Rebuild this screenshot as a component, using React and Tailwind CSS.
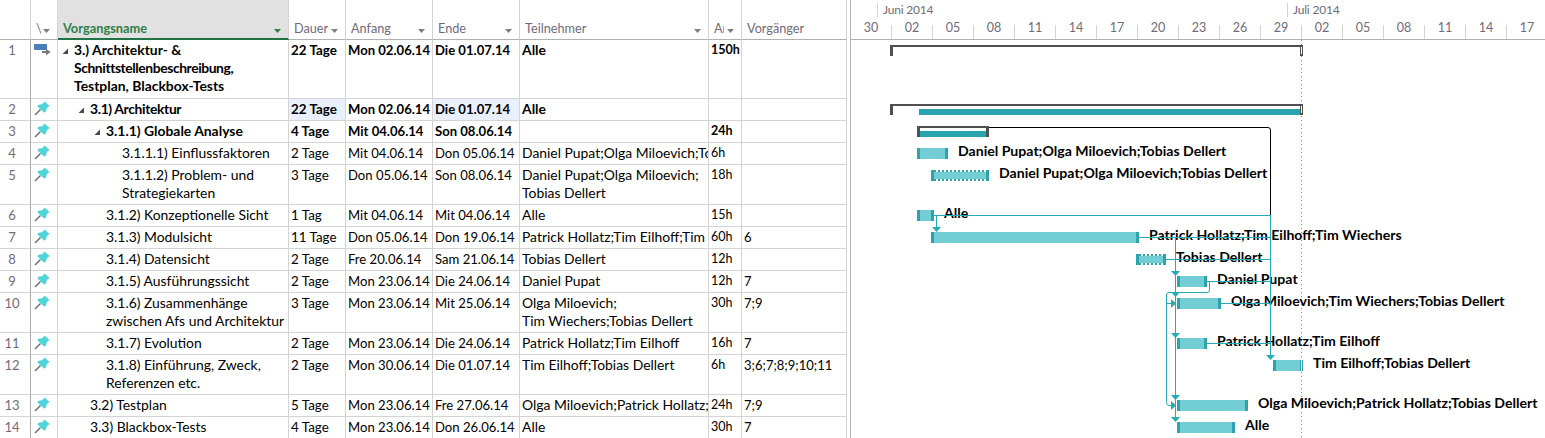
import React from "react";

const FONT = "font-['Lato','Noto_Sans',sans-serif]";

const rows = [
  { h: "h-[59px]", n: "1", icon: "summary", level: 0, tri: true, bold: true, name: ["3.) Architektur- &", ["Schnittstellenbeschreibung,", "tracking-[-0.42px]"], "Testplan, Blackbox-Tests"], dur: "22 Tage", start: "Mon 02.06.14", end: "Die 01.07.14", res: ["Alle"], work: "150h", pred: "" },
  { h: "h-[22px]", n: "2", level: 1, tri: true, bold: true, hl: true, name: [["3.1) Architektur", "tracking-[-0.36px]"]], dur: "22 Tage", start: "Mon 02.06.14", end: "Die 01.07.14", res: ["Alle"], work: "", pred: "" },
  { h: "h-[22px]", n: "3", level: 2, tri: true, bold: true, name: ["3.1.1) Globale Analyse"], dur: "4 Tage", start: "Mit 04.06.14", end: "Son 08.06.14", res: [""], work: "24h", pred: "" },
  { h: "h-[22px]", n: "4", level: 3, name: ["3.1.1.1) Einflussfaktoren"], dur: "2 Tage", start: "Mit 04.06.14", end: "Don 05.06.14", res: ["Daniel Pupat;Olga Miloevich;Tobias Dellert"], work: "6h", pred: "" },
  { h: "h-[40px]", n: "5", level: 3, name: ["3.1.1.2) Problem- und", "Strategiekarten"], dur: "3 Tage", start: "Don 05.06.14", end: "Son 08.06.14", res: ["Daniel Pupat;Olga Miloevich;", "Tobias Dellert"], work: "18h", pred: "" },
  { h: "h-[22px]", n: "6", level: 2, name: ["3.1.2) Konzeptionelle Sicht"], dur: "1 Tag", start: "Mit 04.06.14", end: "Mit 04.06.14", res: ["Alle"], work: "15h", pred: "" },
  { h: "h-[22px]", n: "7", level: 2, name: ["3.1.3) Modulsicht"], dur: "11 Tage", start: "Don 05.06.14", end: "Don 19.06.14", res: ["Patrick Hollatz;Tim Eilhoff;Tim Wiechers"], work: "60h", pred: "6" },
  { h: "h-[22px]", n: "8", level: 2, name: ["3.1.4) Datensicht"], dur: "2 Tage", start: "Fre 20.06.14", end: "Sam 21.06.14", res: ["Tobias Dellert"], work: "12h", pred: "" },
  { h: "h-[22px]", n: "9", level: 2, name: ["3.1.5) Ausführungssicht"], dur: "2 Tage", start: "Mon 23.06.14", end: "Die 24.06.14", res: ["Daniel Pupat"], work: "12h", pred: "7" },
  { h: "h-[40px]", n: "10", level: 2, name: ["3.1.6) Zusammenhänge", "zwischen Afs und Architektur"], dur: "3 Tage", start: "Mon 23.06.14", end: "Mit 25.06.14", res: ["Olga Miloevich;", "Tim Wiechers;Tobias Dellert"], work: "30h", pred: "7;9" },
  { h: "h-[22px]", n: "11", level: 2, name: ["3.1.7) Evolution"], dur: "2 Tage", start: "Mon 23.06.14", end: "Die 24.06.14", res: ["Patrick Hollatz;Tim Eilhoff"], work: "16h", pred: "7" },
  { h: "h-[40px]", n: "12", level: 2, name: ["3.1.8) Einführung, Zweck,", "Referenzen etc."], dur: "2 Tage", start: "Mon 30.06.14", end: "Die 01.07.14", res: ["Tim Eilhoff;Tobias Dellert"], work: "6h", pred: "3;6;7;8;9;10;11" },
  { h: "h-[22px]", n: "13", level: 1, name: ["3.2) Testplan"], dur: "5 Tage", start: "Mon 23.06.14", end: "Fre 27.06.14", res: ["Olga Miloevich;Patrick Hollatz;Tobias Dellert"], work: "24h", pred: "7;9" },
  { h: "h-[22px]", n: "14", level: 1, name: ["3.3) Blackbox-Tests"], dur: "4 Tage", start: "Mon 23.06.14", end: "Don 26.06.14", res: ["Alle"], work: "30h", pred: "7" },
];

const GRID = "grid grid-cols-[31px_27px_231px_57px_87px_87px_189px_33px_105px]";

function Caret({ color = "#7f7f7f" }) {
  return (
    <svg width="8" height="4" viewBox="0 0 8 4" className="absolute right-[6px] top-[29px]">
      <path d="M0 0H7L3.5 4Z" fill={color} />
    </svg>
  );
}

function Pin() {
  return (
    <svg width="16" height="16" viewBox="0 0 16 16" className="ml-[3px] mt-[2px]">
      <path d="M1 14L6.5 8.5" stroke="#6b6b6b" strokeWidth="1.4" />
      <path d="M10.5 0.5L15.5 5L13 7L11.5 11L10 11.5L3.5 5.5L4 4L8.5 3Z" fill="#4dd5da" />
    </svg>
  );
}

function SummaryIcon() {
  return (
    <svg width="17" height="12" viewBox="0 0 17 12" className="ml-[3px] mt-[4px]">
      <rect x="0" y="0" width="13" height="6" rx="1" fill="#4a7ebb" />
      <path d="M8 7H12V4.5L16.5 8L12 11.5V9H8Z" fill="#7a7a7a" />
    </svg>
  );
}

function Tri() {
  return (
    <svg width="7" height="7" viewBox="0 0 7 7" className="absolute top-[7px] left-0">
      <path d="M6 0.5V6H0.5Z" fill="#4a4a4a" />
    </svg>
  );
}

function Lines({ lines }) {
  return lines.map((l, i) => {
    const text = Array.isArray(l) ? l[0] : l;
    const cls = Array.isArray(l) ? l[1] : "";
    return (
      <div key={i} className={`whitespace-nowrap overflow-hidden ${cls}`}>{text || "\u00a0"}</div>
    );
  });
}

function Header() {
  const cell = "relative border-r border-[#d4d4d4] border-b border-b-[#b0b0b0] h-[40px] text-[12.7px] text-[#6f6b7c] pt-[19px] leading-[18px] whitespace-nowrap overflow-hidden";
  return (
    <div className={GRID}>
      <div className="h-[40px] border-r border-[#d4d4d4] border-b border-b-[#b0b0b0]" />
      <div className={`${cell} pl-[5px]`}>\<Caret /></div>
      <div className="relative h-[40px] bg-[#e1e1e1] border-r border-[#d4d4d4] border-b-2 border-b-[#217346] pl-[5px] pt-[19px] leading-[18px] text-[12.8px] font-bold text-[#2f7f4a]">
        Vorgangsname<Caret color="#2f7f4a" />
      </div>
      <div className={`${cell} pl-[5px]`}>Dauer<Caret /></div>
      <div className={`${cell} pl-[5px]`}>Anfang<Caret /></div>
      <div className={`${cell} pl-[5px]`}>Ende<Caret /></div>
      <div className={`${cell} pl-[5px]`}>Teilnehmer<Caret /></div>
      <div className={`${cell} pl-[5px]`}><span className="inline-block w-[10px] overflow-hidden align-bottom">Arbeit</span><Caret /></div>
      <div className={`${cell} pl-[5px]`}>Vorgänger</div>
    </div>
  );
}

function Row({ r }) {
  const c = "border-r border-b border-[#d4d4d4] pl-[2px] pt-[1px] overflow-hidden";
  const weight = r.bold ? "font-bold" : "";
  const pad = ["pl-[16px]", "pl-[32px]", "pl-[48px]", "pl-[64px]"][r.level];
  return (
    <div className={`${GRID} ${r.h} leading-[18px] text-[13.9px] text-black ${weight}`}>
      <div className="border-b border-[#d4d4d4] border-r border-r-[#a9a9a9] text-center pr-[6px] pt-[1px] text-[#6f6b7c] font-normal text-[13px]">{r.n}</div>
      <div className="border-r border-b border-[#d4d4d4]">{r.icon === "summary" ? <SummaryIcon /> : <Pin />}</div>
      <div className={`border-r border-b border-[#d4d4d4] pt-[1px] ${pad}`}>
        <div className="relative">
          {r.tri && <div className="absolute top-0 left-[-12px] w-[7px] h-[18px]"><Tri /></div>}
          <Lines lines={r.name} />
        </div>
      </div>
      <div className={`${c} text-[13.4px] ${r.hl ? "bg-[#eaf0fb]" : ""}`}>{r.dur}</div>
      <div className={`${c} text-[13.1px]`}>{r.start}</div>
      <div className={`${c} text-[13.1px] ${r.hl ? "bg-[#eaf0fb]" : ""}`}>{r.end}</div>
      <div className={c}><Lines lines={r.res} /></div>
      <div className={`${c} text-[12.5px]`}>{r.work}</div>
      <div className={`${c} text-[13px] pl-[1px]`}>{r.pred}</div>
    </div>
  );
}

const TEAL = "#2aa5ae";
const LIGHT = "#72cdd4";
const LINE = "#25abb8";
const DARK = "#505050";

function Bar({ x, x2, y, dotted, open }) {
  return (
    <g shapeRendering="crispEdges">
      {dotted ? (
        <>
          <rect x={x} y={y + 2} width={x2 - x} height={7} fill={LIGHT} />
          <path d={`M${x + 3} ${y + 1}H${x2 - 3}M${x + 3} ${y + 10}H${x2 - 3}`} stroke={TEAL} strokeWidth="2" strokeDasharray="2 2" />
        </>
      ) : (
        <rect x={x} y={y} width={x2 - x} height={11} fill={LIGHT} />
      )}
      <rect x={x} y={y} width={3} height={11} fill={TEAL} />
      {open ? (
        <>
          <rect x={x2 - 3} y={y} width={1} height={11} fill={TEAL} />
          <rect x={x2 - 2} y={y} width={1} height={11} fill="#ffffff" />
          <rect x={x2 - 1} y={y} width={1} height={11} fill={TEAL} />
        </>
      ) : (
        <rect x={x2 - 3} y={y} width={3} height={11} fill={TEAL} />
      )}
    </g>
  );
}

function Summary({ x, x2, y }) {
  return (
    <g shapeRendering="crispEdges">
      <rect x={x} y={y} width={x2 - x} height={2} fill={DARK} />
      <rect x={x} y={y} width={3} height={11} fill={DARK} />
      <rect x={x2 - 3} y={y} width={3} height={11} fill={DARK} />
    </g>
  );
}

const Down = ({ x, y }) => <path d={`M${x - 4.5} ${y}H${x + 4.5}L${x} ${y + 5}Z`} fill={LINE} />;
const Right = ({ x, y }) => <path d={`M${x} ${y - 4.5}V${y + 4.5}L${x + 5} ${y}Z`} fill={LINE} />;

const labels = [
  [958, 156, "Daniel Pupat;Olga Miloevich;Tobias Dellert"],
  [999, 178, "Daniel Pupat;Olga Miloevich;Tobias Dellert"],
  [944, 218, "Alle"],
  [1149, 240, "Patrick Hollatz;Tim Eilhoff;Tim Wiechers"],
  [1176, 262, "Tobias Dellert"],
  [1217, 284, "Daniel Pupat"],
  [1231, 306, "Olga Miloevich;Tim Wiechers;Tobias Dellert"],
  [1217, 346, "Patrick Hollatz;Tim Eilhoff"],
  [1313, 368, "Tim Eilhoff;Tobias Dellert"],
  [1258, 408, "Olga Miloevich;Patrick Hollatz;Tobias Dellert"],
  [1245, 430, "Alle"],
];

function Chart() {
  return (
    <svg width="694" height="398" viewBox="851 40 694 398" className="block">
      <path d="M1301.5 40V438" stroke="#8a8a8a" strokeDasharray="1 3" />
      <Summary x={890} x2={1303} y={45} />
      <Summary x={890} x2={1303} y={104} />
      <rect x="1301" y="47" width="1" height="7" fill="#fff" shapeRendering="crispEdges" />
      <rect x="1301" y="106" width="1" height="7" fill="#fff" shapeRendering="crispEdges" />
      <rect x="919" y="109" width="381" height="6" fill={TEAL} shapeRendering="crispEdges" />

      <rect x="920" y="131" width="66" height="6" fill={TEAL} shapeRendering="crispEdges" />
      <Summary x={917} x2={989} y={126} />

      <Bar x={917} x2={948} y={148} />
      <Bar x={931} x2={989} y={170} dotted />
      <Bar x={917} x2={934} y={210} />
      <Bar x={931} x2={1139} y={232} />
      <Bar x={1136} x2={1166} y={254} dotted />
      <Bar x={1177} x2={1207} y={276} />
      <Bar x={1177} x2={1221} y={298} />
      <Bar x={1177} x2={1207} y={338} />
      <Bar x={1273} x2={1303} y={360} open />
      <Bar x={1177} x2={1248} y={400} />
      <Bar x={1177} x2={1235} y={422} />

      {labels.map(([x, y, t], i) => (
        <text key={i} x={x} y={y} fontFamily="Lato, sans-serif" fontWeight="700" fontSize="14.1" fill="#000">{t}</text>
      ))}

      <path d="M989 127.5H1268Q1270.5 127.5 1270.5 130V215" fill="none" stroke="#000" />
      <g fill="none" stroke={LINE} shapeRendering="crispEdges">
        <path d="M934 215.5H1270.5V356" />
        <path d="M936.5 216V228" />
        <path d="M1139 237.5H1270" />
        <path d="M1166 259.5H1270" />
        <path d="M1207 281.5H1270" />
        <path d="M1221 303.5H1270" />
        <path d="M1207 343.5H1270" />
        <path d="M1175.5 237V417" />
      </g>
      <path d="M1207 281.5H1209.5V290Q1209.5 292.5 1207 292.5H1169Q1166.5 292.5 1166.5 295V402.5Q1166.5 405.5 1169 405.5H1172M1166.5 303.5H1172" fill="none" stroke={LINE} />
      <Down x={936.5} y={227} />
      <Down x={1175.5} y={271} />
      <Down x={1175.5} y={292} />
      <Down x={1175.5} y={333} />
      <Down x={1270.5} y={355} />
      <Down x={1175.5} y={395} />
      <Down x={1175.5} y={417} />
      <Right x={1171} y={303.5} />
      <Right x={1171} y={405.5} />
    </svg>
  );
}

const days = ["02", "05", "08", "11", "14", "17", "20", "23", "26", "29", "02", "05", "08", "11", "14", "17"];

function TimeScale() {
  return (
    <div className="h-[40px] border-b border-[#b0b0b0] text-[12.5px] text-[#6f6b7c]">
      <div className="flex h-[25px] pt-[3px] text-[12px] tracking-[-0.2px]">
        <div className="w-[26px] shrink-0" />
        <div className="w-[410px] shrink-0 border-l border-[#d4d4d4] pl-[5px] leading-[14px] h-[14px]">Juni 2014</div>
        <div className="flex-1 border-l border-[#d4d4d4] pl-[5px] leading-[14px] h-[14px]">Juli 2014</div>
      </div>
      <div className="flex h-[14px]">
        <div className="w-[40px] shrink-0 text-center leading-[6px]">30</div>
        {days.map((d, i) => (
          <div key={i} className="w-[41px] shrink-0 border-l border-[#d4d4d4] text-center leading-[6px]">{d}</div>
        ))}
      </div>
    </div>
  );
}

export default function App() {
  return (
    <div className={`${FONT} flex w-[1545px] h-[438px] overflow-hidden bg-white`}>
      <div className="w-[847px] shrink-0">
        <Header />
        {rows.map((r) => <Row key={r.n} r={r} />)}
      </div>
      <div className="w-[4px] shrink-0 border-r border-[#b5b5b5]" />
      <div className="flex-1 min-w-0">
        <TimeScale />
        <Chart />
      </div>
    </div>
  );
}
